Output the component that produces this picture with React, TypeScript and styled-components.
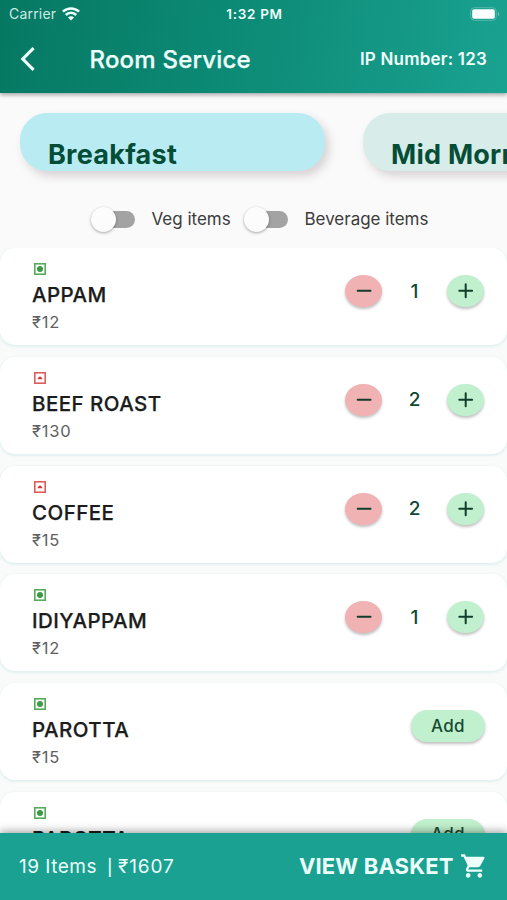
import React from 'react';
import styled, { createGlobalStyle } from 'styled-components';

const GlobalStyle = createGlobalStyle`
  *, *::before, *::after { box-sizing: border-box; }
  body { margin: 0; background: #fafafa; font-family: Inter, Roboto, sans-serif; }
  button { font: inherit; border: 0; padding: 0; margin: 0; background: none; color: inherit; }
`;

const Screen = styled.div`
  width: 507px;
  height: 900px;
  overflow: hidden;
  display: flex;
  flex-direction: column;
  background: #fafafa;
`;

const Header = styled.header`
  flex: none;
  height: 93px;
  z-index: 2;
  color: #effffb;
  background: linear-gradient(100deg, #067862 0%, #0c8a75 45%, #1aa291 100%);
  box-shadow: 0 2px 4px rgba(0, 0, 0, 0.34);
`;

const StatusBar = styled.div`
  height: 27px;
  padding: 0 7px 0 9px;
  display: grid;
  grid-template-columns: 1fr auto 1fr;
  align-items: center;
`;

const Carrier = styled.div`
  display: flex;
  align-items: center;
  gap: 6px;
  font-size: 14px;
  letter-spacing: 0.2px;
  color: #cdece6;
`;

const Clock = styled.div`
  font-size: 13.5px;
  font-weight: 600;
  letter-spacing: 0.7px;
`;

const Battery = styled.svg`
  justify-self: end;
  display: block;
`;

const NavBar = styled.div`
  height: 64px;
  padding: 0 20px;
  display: flex;
  align-items: center;
`;

const BackButton = styled.button`
  width: 69.5px;
  display: flex;
`;

const Title = styled.h1`
  margin: 0;
  flex: 1;
  font-size: 24px;
  font-weight: 500;
  letter-spacing: 0.2px;
  -webkit-text-stroke: 0.25px currentColor;
`;

const IpNumber = styled.div`
  font-size: 17px;
  font-weight: 600;
  letter-spacing: 0.2px;
`;

const Categories = styled.nav`
  flex: none;
  display: flex;
  gap: 38px;
  padding: 20px 0 0 20px;
  height: 98px;
  overflow: hidden;
`;

const Category = styled.div<{ $active?: boolean }>`
  flex: none;
  width: 305px;
  height: 58px;
  padding: 25px 0 0 28px;
  border-radius: 27px;
  background: ${(p) => (p.$active ? '#b9ecf2' : '#d8edea')};
  box-shadow: 4px 5px 10px rgba(80, 50, 60, 0.2);
  color: #044d37;
  font-size: 27px;
  line-height: 33px;
  font-weight: 700;
  letter-spacing: 0.25px;
  white-space: nowrap;
`;

const Filters = styled.div`
  flex: none;
  height: 57px;
  padding: 0 0 1px 91px;
  display: flex;
  align-items: center;
`;

const Filter = styled.label<{ $width: number }>`
  width: ${(p) => p.$width}px;
  display: flex;
  align-items: center;
  gap: 16.5px;
  font-size: 17px;
  letter-spacing: -0.02px;
  color: #3c3c3c;
  white-space: nowrap;
`;

const Track = styled.span`
  flex: none;
  width: 39px;
  height: 17px;
  margin-left: 5px;
  border-radius: 9px;
  background: #a3a3a3;
  display: flex;
  align-items: center;
`;

const Thumb = styled.span`
  width: 25px;
  height: 25px;
  margin-left: -5px;
  border-radius: 50%;
  background: #fcfcfc;
  box-shadow: 0 1px 3px rgba(0, 0, 0, 0.35);
`;

const List = styled.main`
  flex: 1;
  min-height: 0;
  overflow: hidden;
  display: flex;
  flex-direction: column;
  gap: 11.8px;
  background: #f9fafa;
`;

const Card = styled.article`
  flex: none;
  height: 97px;
  padding: 15px 23px 0 32px;
  display: flex;
  justify-content: space-between;
  border-radius: 15px;
  background: #fff;
  box-shadow: 0 1px 2px 1px #e2f2f0;
`;

const Details = styled.div`
  display: flex;
  flex-direction: column;
`;

const Mark = styled.svg`
  display: block;
  margin-left: 2px;
`;

const Name = styled.h2`
  margin: 6px 0 0;
  font-size: 20.5px;
  line-height: 27px;
  font-weight: 500;
  letter-spacing: 0.45px;
  -webkit-text-stroke: 0.25px currentColor;
  color: #1c1c1c;
`;

const Price = styled.div`
  margin-top: 3px;
  font-size: 16.5px;
  line-height: 22px;
  letter-spacing: 0.8px;
  color: #606060;
`;

const Stepper = styled.div`
  height: 32px;
  margin-top: 12px;
  display: flex;
  align-items: center;
`;

const StepButton = styled.button<{ $tone: 'minus' | 'plus' }>`
  width: 37px;
  height: 32px;
  border-radius: 18px / 16px;
  display: grid;
  place-items: center;
  background: ${(p) => (p.$tone === 'minus' ? '#f1b2b3' : '#c0f0cd')};
  box-shadow: 0 2px 3px rgba(0, 0, 0, 0.25);
`;

const Quantity = styled.span`
  width: 65px;
  text-align: center;
  font-size: 19px;
  font-weight: 500;
  color: #0c4a35;
`;

const AddButton = styled.button`
  width: 74px;
  height: 32px;
  margin: 12px -1px 0 0;
  border-radius: 16px;
  background: #c0f0cd;
  box-shadow: 0 2px 3px rgba(0, 0, 0, 0.25);
  color: #164a32;
  font-size: 17px;
  line-height: 30px;
  padding-bottom: 1px;
  font-weight: 500;
  letter-spacing: 0.3px;
`;

const BasketBar = styled.footer`
  flex: none;
  height: 67px;
  z-index: 2;
  padding: 0 19.5px 0 19px;
  display: flex;
  align-items: center;
  justify-content: space-between;
  background: #1aa192;
  color: #ecfffb;
  box-shadow: 0 -2px 8px rgba(0, 0, 0, 0.35);
`;

const Summary = styled.div`
  display: flex;
  align-items: center;
  font-size: 19px;
  letter-spacing: 0.5px;
  white-space: nowrap;
`;

const Divider = styled.span`
  margin: 1px 5px 0 10px;
  font-size: 16px;
  font-weight: 500;
`;

const Total = styled.span`
  letter-spacing: 0.9px;
`;

const BasketLink = styled.button`
  display: flex;
  align-items: center;
  gap: 6px;
  padding-bottom: 1px;
  font-size: 22px;
  font-weight: 700;
  letter-spacing: 0.15px;
`;

type Item = { name: string; price: number; veg: boolean; count: number };

const items: Item[] = [
  { name: 'APPAM', price: 12, veg: true, count: 1 },
  { name: 'BEEF ROAST', price: 130, veg: false, count: 2 },
  { name: 'COFFEE', price: 15, veg: false, count: 2 },
  { name: 'IDIYAPPAM', price: 12, veg: true, count: 1 },
  { name: 'PAROTTA', price: 15, veg: true, count: 0 },
  { name: 'PAROTTA', price: 15, veg: true, count: 0 },
];

const DietMark = ({ veg }: { veg: boolean }) => (
  <Mark width="12" height="12" viewBox="0 0 12 12" fill="none">
    <rect x="0.8" y="0.8" width="10.4" height="10.4" stroke={veg ? '#55ab59' : '#e05c5c'} strokeWidth="1.6" />
    {veg ? <circle cx="6" cy="6" r="3" fill="#3c9a42" /> : <path d="M3.5 7.2C4 5.6 5 4.5 6 4.5s2 1.1 2.5 2.7z" fill="#d83a3a" />}
  </Mark>
);

const StepIcon = ({ plus }: { plus?: boolean }) => (
  <svg width="16" height="16" viewBox="0 0 16 16" stroke="#123d2b" strokeWidth="2" strokeLinecap="round">
    <path d={plus ? 'M1.3 7.8h12.8M7.7 1.3v13' : 'M1.7 7.8h12.8'} />
  </svg>
);

const MenuCard = ({ item }: { item: Item }) => (
  <Card>
    <Details>
      <DietMark veg={item.veg} />
      <Name>{item.name}</Name>
      <Price>{`₹${item.price}`}</Price>
    </Details>
    {item.count > 0 ? (
      <Stepper>
        <StepButton $tone="minus" aria-label="Remove one"><StepIcon /></StepButton>
        <Quantity>{item.count}</Quantity>
        <StepButton $tone="plus" aria-label="Add one"><StepIcon plus /></StepButton>
      </Stepper>
    ) : (
      <AddButton>Add</AddButton>
    )}
  </Card>
);

export default function App() {
  return (
    <>
      <GlobalStyle />
      <Screen>
        <Header>
          <StatusBar>
            <Carrier>
              Carrier
              <svg width="18" height="14" viewBox="0 0 18 14" fill="none" stroke="#effffb" strokeWidth="2.5">
                <path d="M0.9 4.7a11.6 11.6 0 0 1 16.2 0" />
                <path d="M3.8 8a7.3 7.3 0 0 1 10.4 0" />
                <path d="M9 13.5 6 10.4a4.2 4.2 0 0 1 6 0z" fill="#effffb" stroke="none" />
              </svg>
            </Carrier>
            <Clock>1:32 PM</Clock>
            <Battery width="30" height="14" viewBox="0 0 30 14" fill="none">
              <rect x="0.7" y="0.7" width="25.6" height="12.6" rx="3.6" stroke="#58b8aa" strokeWidth="1" />
              <rect x="2.2" y="2.3" width="22.6" height="9.4" rx="1.8" fill="#fff" />
              <path d="M28 4.8c1.6.8 1.6 3.6 0 4.4z" fill="#79c9bd" />
            </Battery>
          </StatusBar>
          <NavBar>
            <BackButton aria-label="Back">
              <svg width="16" height="24" viewBox="0 0 16 24" fill="none">
                <path d="M13.6 1.2 2.8 12l10.8 10.8" stroke="#effffb" strokeWidth="3.1" />
              </svg>
            </BackButton>
            <Title>Room Service</Title>
            <IpNumber>IP Number: 123</IpNumber>
          </NavBar>
        </Header>
        <Categories>
          <Category $active>Breakfast</Category>
          <Category>Mid Morning</Category>
        </Categories>
        <Filters>
          <Filter $width={153}><Track><Thumb /></Track>Veg items</Filter>
          <Filter $width={190}><Track><Thumb /></Track>Beverage items</Filter>
        </Filters>
        <List>
          {items.map((item, i) => <MenuCard key={i} item={item} />)}
        </List>
        <BasketBar>
          <Summary>
            <span>19 Items</span>
            <Divider>|</Divider>
            <Total>₹1607</Total>
          </Summary>
          <BasketLink>
            VIEW BASKET
            <svg width="28" height="28" viewBox="0 0 24 24" fill="currentColor">
              <path d="M7 18c-1.1 0-1.99.9-1.99 2S5.9 22 7 22s2-.9 2-2-.9-2-2-2zM1 2v2h2l3.6 7.59-1.35 2.45c-.16.28-.25.61-.25.96 0 1.1.9 2 2 2h12v-2H7.42c-.14 0-.25-.11-.25-.25l.03-.12.9-1.63h7.45c.75 0 1.41-.41 1.75-1.03l3.58-6.49A1.003 1.003 0 0 0 20 4H5.21l-.94-2H1zm16 16c-1.1 0-1.99.9-1.99 2s.89 2 1.99 2 2-.9 2-2-.9-2-2-2z" />
            </svg>
          </BasketLink>
        </BasketBar>
      </Screen>
    </>
  );
}
